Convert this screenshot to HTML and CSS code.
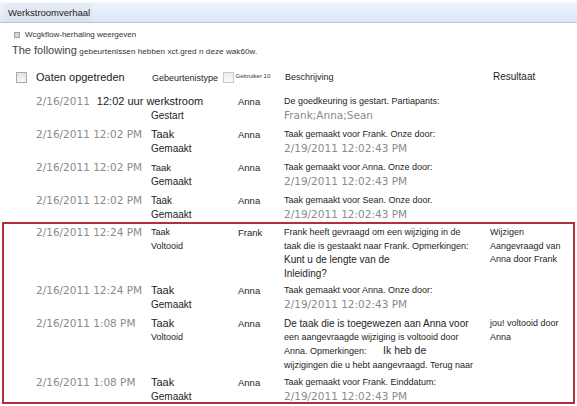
FILE: index.html
```html
<!DOCTYPE html>
<html>
<head>
<meta charset="utf-8">
<link rel="stylesheet" href="styles.css">
</head>
<body>
<div class="titlebar"><span class="title">Werkstroomverhaal</span></div>
<div class="toggle"><span class="bullet"></span>Wcgkflow-herhaling weergeven</div>
<div class="intro"><span class="big">The following</span> <span class="small">gebeurtenissen hebben xct.gred n deze wak60w.</span></div>

<div class="head">
  <span class="cb"></span>
  <span class="h-date">Oaten opgetreden</span>
  <span class="h-type">Gebeurtenistype <span class="cb cb-small"></span><span class="tiny">Gebruiker 10</span></span>
  <span class="h-desc">Beschrijving</span>
  <span class="h-res">Resultaat</span>
</div>

<div class="rows">
  <div class="row">
    <div class="date"><div class="nowrap">2/16/2011<span class="start">12:02 uur werkstroom</span></div></div>
    <div class="type"><div>&nbsp;</div><div class="t10">Gestart</div></div>
    <div class="user">Anna</div>
    <div class="desc"><div>De goedkeuring is gestart. Partiapants:</div><div class="gray">Frank;Anna;Sean</div></div>
    <div class="res"></div>
  </div>
  <div class="row">
    <div class="date">2/16/2011 12:02 PM</div>
    <div class="type"><div class="t11">Taak</div><div class="t10">Gemaakt</div></div>
    <div class="user">Anna</div>
    <div class="desc"><div>Taak gemaakt voor Frank. Onze door:</div><div class="gray">2/19/2011 12:02:43 PM</div></div>
    <div class="res"></div>
  </div>
  <div class="row">
    <div class="date">2/16/2011 12:02 PM</div>
    <div class="type"><div class="t95">Taak</div><div class="t10">Gemaakt</div></div>
    <div class="user">Anna</div>
    <div class="desc"><div>Taak gemaakt voor Anna. Onze door:</div><div class="gray">2/19/2011 12:02:43 PM</div></div>
    <div class="res"></div>
  </div>
  <div class="row row-end">
    <div class="date">2/16/2011 12:02 PM</div>
    <div class="type"><div class="t10">Taak</div><div class="t10">Gemaakt</div></div>
    <div class="user">Anna</div>
    <div class="desc"><div>Taak gemaakt voor Sean. Onze door.</div><div class="gray">2/19/2011 12:02:43 PM</div></div>
    <div class="res"></div>
  </div>
</div>

<div class="group">
  <div class="row">
    <div class="date">2/16/2011 12:24 PM</div>
    <div class="type"><div>Taak</div><div>Voltooid</div></div>
    <div class="user">Frank</div>
    <div class="desc"><div>Frank heeft gevraagd om een wijziging in de</div><div>taak die is gestaakt naar Frank. Opmerkingen:</div><div class="t10">Kunt u de lengte van de</div><div class="t10">Inleiding?</div></div>
    <div class="res"><div>Wijzigen</div><div>Aangevraagd van</div><div>Anna door Frank</div></div>
  </div>
  <div class="row row-gap">
    <div class="date">2/16/2011 12:24 PM</div>
    <div class="type"><div class="t11">Taak</div><div class="t10">Gemaakt</div></div>
    <div class="user">Anna</div>
    <div class="desc"><div>Taak gemaakt voor Anna. Onze door:</div><div class="gray">2/19/2011 12:02:43 PM</div></div>
    <div class="res"></div>
  </div>
  <div class="row">
    <div class="date">2/16/2011 1:08 PM</div>
    <div class="type"><div class="t11">Taak</div><div>Voltooid</div></div>
    <div class="user">Anna</div>
    <div class="desc"><div class="t10">De taak die is toegewezen aan Anna voor</div><div>een aangevraagde wijziging is voltooid door</div><div>Anna. Opmerkingen: <span class="t105 gapl">Ik heb de</span></div><div>wijzigingen die u hebt aangevraagd. Terug naar</div></div>
    <div class="res"><div>jou! voltooid door</div><div>Anna</div></div>
  </div>
  <div class="row last">
    <div class="date">2/16/2011 1:08 PM</div>
    <div class="type"><div class="t11">Taak</div><div class="t10">Gemaakt</div></div>
    <div class="user">Anna</div>
    <div class="desc"><div>Taak gemaakt voor Frank. Einddatum:</div><div class="gray">2/19/2011 12:02:43 PM</div></div>
    <div class="res"></div>
  </div>
</div>
</body>
</html>
```

FILE: styles.css
```css
html, body {
  margin: 0;
  padding: 0;
  background: #ffffff;
}
body {
  width: 577px;
  height: 406px;
  overflow: hidden;
  font-family: "Liberation Sans", Arial, sans-serif;
  font-size: 9px;
  color: #1e1e1e;
}
.titlebar {
  margin-top: 2px;
  height: 21px;
  background: linear-gradient(#eef4fc, #dae6f7);
  border-bottom: 1px solid #b5c5de;
  border-top: 1px solid #f4f8fd;
  box-sizing: border-box;
}
.title {
  display: inline-block;
  margin-left: 4px;
  padding: 0 3px 0 4px;
  height: 19px;
  line-height: 19px;
  font-size: 9.5px;
  color: #222;
  background: linear-gradient(#e6edf6, #d9e2ee);
}
.toggle {
  margin-top: 5px;
  padding-left: 14px;
  height: 14px;
  line-height: 14px;
  font-size: 8px;
  color: #333;
  display: flex;
  align-items: center;
}
.bullet {
  width: 4px;
  height: 4px;
  border: 1px solid #a0a0a0;
  background: #d8d8d8;
  margin-right: 5px;
}
.intro {
  margin-top: 0;
  padding-left: 12px;
  height: 16px;
  line-height: 16px;
  color: #333;
}
.intro .big { font-size: 11px; color: #444; }
.intro .small { font-size: 8px; letter-spacing: 0.1px; }

.head {
  margin-top: 11px;
  display: grid;
  grid-template-columns: 20px 116px 133px 208px 1fr;
  padding-left: 16px;
  height: 14px;
  line-height: 14px;
  align-items: center;
}
.cb {
  display: inline-block;
  width: 11px;
  height: 11px;
  box-sizing: border-box;
  border: 1px solid #a9a9a9;
  background: linear-gradient(#e2e2e2, #f6f6f6);
}
.cb-small {
  vertical-align: -2px;
  margin-left: 2px;
  border-color: #c8c8c8;
  background: linear-gradient(#ececec, #fafafa);
}
.h-date { font-size: 11px; color: #222; }
.h-type { font-size: 9px; white-space: nowrap; }
.tiny { font-size: 6px; margin-left: 2px; vertical-align: 3px; color: #333; }
.h-desc { font-size: 9px; }
.h-res { font-size: 10px; }

.rows { margin-top: 9px; }

.row {
  display: grid;
  grid-template-columns: 114px 87px 47px 206px 1fr;
  padding: 3px 0 3px 36px;
  line-height: 13.5px;
  font-size: 9px;
}
.row.row-end { padding-bottom: 1px; }
.row > div { min-width: 0; }
.date {
  font-family: "DejaVu Sans", Verdana, sans-serif;
  font-size: 10.5px;
  color: #8a8a8a;
  white-space: nowrap;
}
.nowrap { white-space: nowrap; }
.start {
  font-family: "Liberation Sans", Arial, sans-serif;
  font-size: 11px;
  color: #1a1a1a;
  margin-left: 7px;
}
.type { padding-left: 1px; }
.user { font-size: 9.5px; padding-left: 1px; }
.desc { white-space: nowrap; }
.res { white-space: nowrap; }
.gray {
  font-family: "DejaVu Sans", Verdana, sans-serif;
  font-size: 10.5px;
  color: #8a8a8a;
}
.t95 { font-size: 9.5px; }
.t10 { font-size: 10px; }
.t11 { font-size: 11px; }
.t105 { font-size: 10.5px; }
.gapl { margin-left: 14px; }

.group {
  margin: 0 2px;
  border: 2px solid #b1313b;
  height: 182px;
  box-sizing: border-box;
  overflow: hidden;
}
.group .row {
  padding: 2px 0 2px 32px;
}
.group .row-gap { padding-bottom: 4px; }
.group .row.last { padding-bottom: 0; }
```
